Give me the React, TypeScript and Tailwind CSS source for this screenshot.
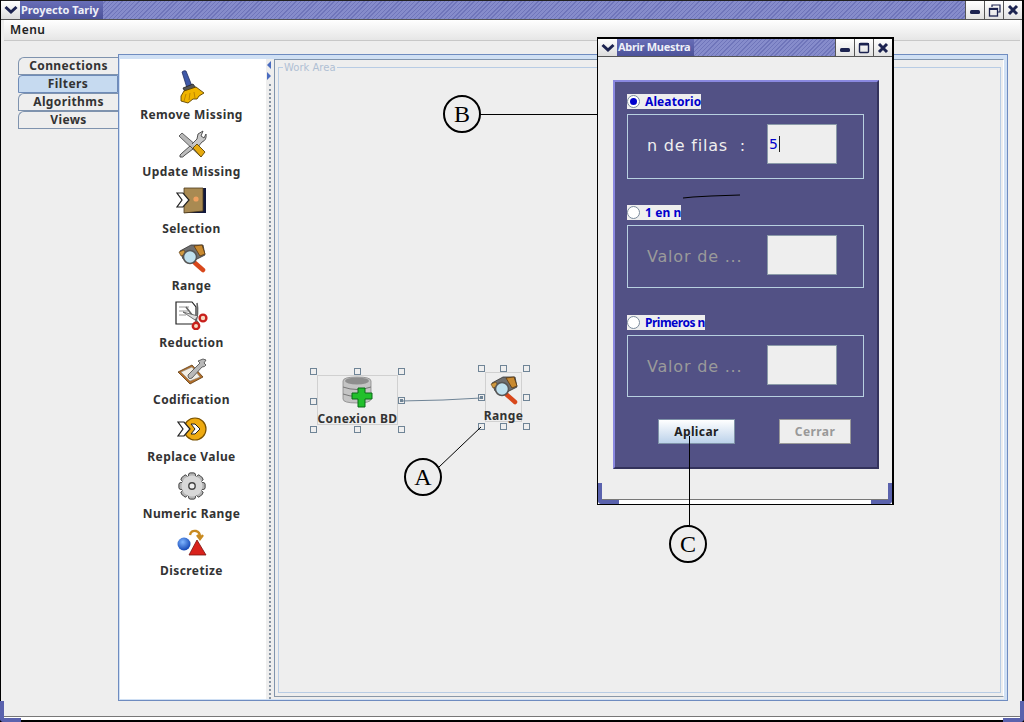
import React from 'react';

const hatch =
  'bg-[repeating-linear-gradient(135deg,#6f75ba_0px,#6f75ba_1px,#868ccb_1px,#868ccb_3px)]';
const titleText =
  "h-full flex items-center pl-[1px] pr-[4px] bg-gradient-to-b from-[#686eb8] to-[#4c5299] font-['Noto_Sans',sans-serif] text-[11px] font-bold text-[#eef0f8]";
const bold = "font-['Noto_Sans',sans-serif] font-bold text-[12px] tracking-[0.4px] whitespace-nowrap";

const Chevron = () => (
  <svg width="14" height="10" viewBox="0 0 14 10">
    <path d="M1.5 2 L7 7 L12.5 2" fill="none" stroke="#1c2350" strokeWidth="3" />
  </svg>
);

const MinIcon = () => (
  <svg width="12" height="12" viewBox="0 0 12 12">
    <rect x="1" y="6" width="10" height="4" rx="1.5" fill="#1c2350" />
  </svg>
);

const MaxIcon = () => (
  <svg width="12" height="12" viewBox="0 0 12 12">
    <rect x="1.5" y="1.5" width="9" height="9" rx="1" fill="none" stroke="#1c2350" strokeWidth="1.4" />
    <rect x="1" y="1" width="10" height="2.5" fill="#1c2350" />
  </svg>
);

const RestoreIcon = () => (
  <svg width="13" height="13" viewBox="0 0 13 13">
    <path d="M4 3 V1 H12 V8 H10" fill="none" stroke="#1c2350" strokeWidth="1.2" />
    <rect x="1.5" y="4.5" width="8" height="7.5" fill="none" stroke="#1c2350" strokeWidth="1.3" />
    <rect x="1" y="4" width="9" height="2" fill="#1c2350" />
  </svg>
);

const CloseIcon = () => (
  <svg width="12" height="12" viewBox="0 0 12 12">
    <path d="M2 2 L10 10 M10 2 L2 10" stroke="#1c2350" strokeWidth="3" />
  </svg>
);

const WinButton = ({ children }: { children: React.ReactNode }) => (
  <div className="w-[19px] h-full flex items-center justify-center bg-gradient-to-b from-white to-[#e2e2e2] border-l border-[#555]">
    {children}
  </div>
);

const Broom = () => (
  <svg width="32" height="34" viewBox="0 0 32 34">
    <path d="M6 2 Q8 0 10 1 L16 16 L11 18 Z" fill="#3f59a8" stroke="#24305f" strokeWidth="0.8" />
    <path d="M7 18 L17 14 L20 18 L9 22 Z" fill="#555" stroke="#222" strokeWidth="0.8" />
    <path d="M8 21 L20 17 L28 23 L23 26 L21 29 L17 29 L12 33 L5 31 L5 26 Z" fill="#f0b400" stroke="#5d4300" strokeWidth="0.9" />
    <path d="M10 24 L8 31 M14 23 L13 30 M18 22 L19 28" stroke="#b07a00" strokeWidth="0.8" />
  </svg>
);

const Tools = () => (
  <svg width="32" height="30" viewBox="0 0 32 30">
    <path d="M6 4 L3 7 L24 27 L28 23 Z" fill="#b8b8b8" stroke="#444" strokeWidth="0.8" />
    <path d="M16 15 L21 10 L22 5 L27 2 L25 7 L28 9 L30 5 Q31 11 26 13 L21 19" fill="#c8c8c8" stroke="#444" strokeWidth="0.9" />
    <path d="M14 17 L6 24 Q3 26 4 28 Q7 29 9 26 L17 20 Z" fill="#bdbdbd" stroke="#444" strokeWidth="0.9" />
    <path d="M17 19 L21 15 L29 23 L25 28 Z" fill="#e6aa10" stroke="#5d4300" strokeWidth="0.9" />
  </svg>
);

const ArrowOutline = ({ x, y }: { x: number; y: number }) => (
  <path d={`M${x} ${y} h6 l6 7 l-6 7 h-6 l5 -7 Z`} fill="#fff" stroke="#222" strokeWidth="1.2" />
);

const Door = () => (
  <svg width="32" height="30" viewBox="0 0 32 30">
    <rect x="8" y="2" width="22" height="25" fill="#12183c" />
    <path d="M8 2 H27 V25 L8 27 Z" fill="#a98a52" stroke="#4b3a1c" strokeWidth="0.8" />
    <circle cx="20" cy="13" r="2.6" fill="#f0a060" />
    <ArrowOutline x={1} y={7} />
  </svg>
);

const RangeIcon = () => (
  <svg className="shrink-0" width="30" height="30" viewBox="0 0 30 30">
    <path d="M3 8 L14 2 L26 2 L28 12 L16 18 L6 16 Z" fill="#6f6f6f" stroke="#333" strokeWidth="0.8" />
    <path d="M17 3 L25 2 L28 11 L23 13 Z" fill="#c98a30" stroke="#5d3a10" strokeWidth="0.8" />
    <path d="M2 9 L7 7 L9 11 L4 13 Z" fill="#d19a40" stroke="#5d3a10" strokeWidth="0.6" />
    <path d="M18 20 L26 27" stroke="#d8481c" strokeWidth="4.5" strokeLinecap="round" />
    <circle cx="13" cy="14" r="6.5" fill="#bfe0ee" stroke="#555" strokeWidth="1.5" />
  </svg>
);

const Scissors = () => (
  <svg width="34" height="30" viewBox="0 0 34 30">
    <path d="M1 2 H17 L21 7 V24 H1 Z" fill="#fff" stroke="#222" strokeWidth="1.2" />
    <path d="M4 7 H14 M4 11 H13 M4 15 H11" stroke="#999" strokeWidth="1" />
    <path d="M11 7 L24 24 M22 3 Q24 14 20 24" fill="none" stroke="#666" strokeWidth="1.6" />
    <path d="M8 12 L20 20 L23 16 Z" fill="#ddd" stroke="#555" strokeWidth="0.8" />
    <circle cx="28" cy="18" r="3.4" fill="#f6d9c0" stroke="#c8201c" strokeWidth="2.4" />
    <circle cx="21" cy="26" r="3.2" fill="#f6d9c0" stroke="#c8201c" strokeWidth="2.4" />
  </svg>
);

const Clipboard = () => (
  <svg width="32" height="28" viewBox="0 0 32 28">
    <path d="M2 14 L16 7 L27 19 L14 26 Z" fill="#b5702a" stroke="#5d3a10" strokeWidth="0.8" />
    <path d="M5 14 L16 9 L24 19 L14 23 Z" fill="#f3efe6" stroke="#888" strokeWidth="0.6" />
    <path d="M12 17 L24 5 L22 3 L27 1 L30 2 L28 5 L30 7 Q29 9 26 9 L16 20 Q12 22 12 17 Z" fill="#b8b8b8" stroke="#555" strokeWidth="0.9" />
  </svg>
);

const Replace = () => (
  <svg width="30" height="28" viewBox="0 0 30 28">
    <circle cx="18" cy="14" r="11" fill="#eeaa10" stroke="#7a5200" strokeWidth="1.2" />
    <path d="M14 9 h4 l5 5 l-5 5 h-4 l4 -5 Z" fill="#fff" stroke="#222" strokeWidth="1" />
    <ArrowOutline x={1} y={7} />
  </svg>
);

const Gear = () => {
  const teeth = [0, 45, 90, 135, 180, 225, 270, 315];
  return (
    <svg width="28" height="28" viewBox="0 0 28 28">
      {teeth.map((a) => (
        <rect
          key={a}
          x="10.5"
          y="1"
          width="7"
          height="26"
          rx="2"
          fill="#b4b4b4"
          stroke="#444"
          strokeWidth="0.8"
          transform={`rotate(${a} 14 14)`}
        />
      ))}
      <circle cx="14" cy="14" r="10.5" fill="#d8d8d8" />
      <circle cx="14" cy="14" r="3.2" fill="#eee" stroke="#444" strokeWidth="1.4" />
    </svg>
  );
};

const Shapes = () => (
  <svg width="32" height="30" viewBox="0 0 32 30">
    <defs>
      <radialGradient id="ball" cx="0.4" cy="0.35" r="0.7">
        <stop offset="0" stopColor="#7fb5ff" />
        <stop offset="1" stopColor="#0b3fb0" />
      </radialGradient>
    </defs>
    <path d="M14 7 Q15 2 20 3 Q24 4 24 9 M21 7 L24 11 L27 7" fill="none" stroke="#c88a20" strokeWidth="2.4" />
    <circle cx="8" cy="16" r="6.5" fill="url(#ball)" />
    <path d="M21 12 L30 27 H13 Z" fill="#d9221c" stroke="#7a1410" strokeWidth="0.8" />
  </svg>
);

const DbIcon = () => (
  <svg className="shrink-0" width="32" height="32" viewBox="0 0 32 32">
    <path d="M1 5 Q1 1 15 1 Q29 1 29 5 V23 Q29 27 15 27 Q1 27 1 23 Z" fill="#c4c4c4" stroke="#888" strokeWidth="0.8" />
    <ellipse cx="15" cy="5" rx="12" ry="3.4" fill="#8e8e8e" />
    <path d="M1 11 Q15 16 29 11 M1 18 Q15 23 29 18" fill="none" stroke="#777" strokeWidth="1" />
    <path d="M16 12 H23 V17 H30 V23 H23 V31 H16 V23 H10 V17 H16 Z" fill="#22c02c" stroke="#0b6a18" strokeWidth="1" />
  </svg>
);

const tools = [
  { label: 'Remove Missing', icon: <Broom /> },
  { label: 'Update Missing', icon: <Tools /> },
  { label: 'Selection', icon: <Door /> },
  { label: 'Range', icon: <RangeIcon /> },
  { label: 'Reduction', icon: <Scissors /> },
  { label: 'Codification', icon: <Clipboard /> },
  { label: 'Replace Value', icon: <Replace /> },
  { label: 'Numeric Range', icon: <Gear /> },
  { label: 'Discretize', icon: <Shapes /> },
];

const tabs = ['Connections', 'Filters', 'Algorithms', 'Views'];

const Handle = ({ x, y, dot }: { x: number; y: number; dot?: boolean }) => (
  <div
    className="absolute w-[7px] h-[7px] border border-[#6f8496] bg-[#eeeeee] flex items-center justify-center"
    style={{ left: x, top: y }}
  >
    {dot && <div className="w-[3px] h-[3px] bg-[#6f8496]" />}
  </div>
);

const Radio = ({ label, checked, tight }: { label: string; checked?: boolean; tight?: boolean }) => (
  <div className="flex items-center h-[15px] w-fit bg-[#eeeeee]">
    <div className="w-[13px] h-[13px] rounded-full border border-[#7a8a9c] bg-white flex items-center justify-center shrink-0">
      {checked && <div className="w-[7px] h-[7px] rounded-full bg-[#0000cc]" />}
    </div>
    <span
      className={`ml-[5px] font-['Noto_Sans',sans-serif] text-[12px] leading-none font-bold text-[#0000cc] whitespace-nowrap ${
        tight ? 'tracking-[-0.5px]' : 'tracking-[0.1px]'
      }`}
    >
      {label}
    </span>
  </div>
);

const TextBox = ({ children }: { children?: React.ReactNode }) => (
  <div className="w-[70px] h-[40px] shrink-0 bg-[#eeeeee] border border-[#8a9aa8] flex items-center pl-[1px]">{children}</div>
);

const Group = ({
  label,
  muted,
  value,
  height,
}: {
  label: string;
  muted?: boolean;
  value?: boolean;
  height: string;
}) => (
  <div className={`w-[237px] ${height} border border-[#b8d0e0] pt-[9px] pl-[19px] pr-[26px]`}>
    <div className="flex items-center justify-between">
      <span className={`pt-[3px] text-[16px] tracking-[0.8px] whitespace-pre ${muted ? 'text-[#9a9a9a]' : 'text-[#eeeeee]'}`}>
        {label}
      </span>
      <TextBox>
        {value && (
          <>
            <span className="text-[14px] text-[#0000cc]">5</span>
            <span className="ml-[1px] w-px h-[16px] bg-[#222]" />
          </>
        )}
      </TextBox>
    </div>
  </div>
);

const Callout = ({ x, y, letter }: { x: number; y: number; letter: string }) => (
  <div
    className="absolute w-[38px] h-[38px] rounded-full border-2 border-black bg-[#eeeeee] flex items-center justify-center font-['Liberation_Serif',serif] text-[24px] leading-none text-black"
    style={{ left: x, top: y }}
  >
    {letter}
  </div>
);

const FrameCorner = ({ side }: { side: 'left' | 'right' }) => (
  <div
    className={`absolute bottom-0 w-[21px] h-[21px] border-b-[4px] border-[#5a62ad] ${
      side === 'left' ? 'left-0 border-l-[4px] rounded-bl-[4px]' : 'right-0 border-r-[4px] rounded-br-[4px]'
    }`}
  />
);

export default function App() {
  return (
    <div className="relative w-[1024px] h-[722px] overflow-hidden bg-[#eeeeee] font-['DejaVu_Sans',sans-serif] flex flex-col">
      {/* Main title bar */}
      <div className="h-[20px] shrink-0 ml-[1px] mr-[2px] flex border-t border-[#222] border-b border-b-[#555]">
        <div className="w-[19px] flex items-center justify-center bg-gradient-to-b from-white to-[#dcdcdc]">
          <Chevron />
        </div>
        <div className={`flex-1 flex items-center ${hatch}`}>
          <span className={titleText}>Proyecto Tariy</span>
        </div>
        <WinButton><MinIcon /></WinButton>
        <WinButton><RestoreIcon /></WinButton>
        <WinButton><CloseIcon /></WinButton>
      </div>

      {/* Menu */}
      <div className="h-[21px] shrink-0 mx-[4px] flex items-center pl-[6px] bg-gradient-to-b from-white to-[#e6e6e6] border-b border-[#c8c8c8] font-['Noto_Sans',sans-serif] font-semibold text-[12px] tracking-[0.5px] text-[#222]">
        Menu
      </div>

      <div className="flex-1 min-h-0 flex pl-[18px] pt-[13px]">
        {/* Side tabs */}
        <div className="w-[100px] shrink-0 pt-[3px] flex flex-col">
          {tabs.map((t) => (
            <div
              key={t}
              className={
                t === 'Filters'
                  ? `h-[18px] flex items-center justify-center bg-[#c6daf0] border border-[#6f8cb8] rounded-tl-[4px] text-[#333] ${bold}`
                  : `h-[18px] flex items-center justify-center border-l border-t border-b border-[#7f93ae] rounded-tl-[6px] text-[#333] ${bold}`
              }
            >
              {t}
            </div>
          ))}
        </div>

        {/* Main panel */}
        <div className="w-[890px] h-[647px] shrink-0 border border-[#6f8cc0] bg-[#d0e0f4] pt-[4px] pb-[1px] pl-[1px] pr-[3px]">
          <div className="h-full flex bg-[#eeeeee]">
            {/* Tool list */}
            <div className="w-[146px] shrink-0 bg-white pt-[10px] pr-[3px] flex flex-col">
              {tools.map((tool) => (
                <div key={tool.label} className="h-[57px] shrink-0 flex flex-col items-center">
                  <div className="h-[36px] flex items-center justify-center">{tool.icon}</div>
                  <span className={`mt-[2px] leading-[16px] text-[#333] ${bold}`}>{tool.label}</span>
                </div>
              ))}
            </div>

            {/* Split bar */}
            <div className="w-[8px] shrink-0 relative bg-[#eeeeee]">
              <div className="absolute left-[1px] top-[2px] w-0 h-0 border-y-[4px] border-y-transparent border-r-[4px] border-r-[#4a6cc0]" />
              <div className="absolute left-[1px] top-[13px] w-0 h-0 border-y-[4px] border-y-transparent border-l-[4px] border-l-[#4a6cc0]" />
              <div className="absolute left-[3px] top-[25px] bottom-0 border-l-2 border-dotted border-[#8a96a4]" />
            </div>

            {/* Work area */}
            <div className="flex-1 min-w-0 mb-[2px] bg-[#eeeeee] border-t border-l border-[#8094ac] border-b border-b-[#8a98a8] border-r border-r-white pl-[3px] pt-[7px] pr-[2px] pb-[3px]">
              <div className="h-full relative border border-[#b8cce4]">
                <span className="absolute left-[4px] top-[-6px] px-[1px] bg-[#eeeeee] text-[10px] leading-[12px] text-[#b0c0d4]">
                  Work Area
                </span>
              </div>
            </div>
          </div>
        </div>
      </div>

      {/* Bottom edge of main window */}
      <div className="absolute left-[1px] right-[2px] bottom-[1px] h-[5px] bg-white border-t border-[#777]" />

      {/* Diagram nodes */}
      <div className="absolute left-[317px] top-[375px] w-[81px] h-[50px] border border-[#d0d0d0] flex flex-col items-center">
        <DbIcon />
        <span className={`mt-[4px] leading-[14px] text-[#333] ${bold}`}>Conexion BD</span>
      </div>
      <div className="absolute left-[485px] top-[372px] w-[37px] h-[50px] border border-[#d0d0d0] flex flex-col items-center pt-[2px]">
        <RangeIcon />
        <span className={`mt-[4px] leading-[14px] text-[#333] ${bold}`}>Range</span>
      </div>
      <Handle x={310} y={368} />
      <Handle x={354} y={368} />
      <Handle x={398} y={368} />
      <Handle x={310} y={398} />
      <Handle x={398} y={397} dot />
      <Handle x={310} y={426} />
      <Handle x={354} y={426} />
      <Handle x={398} y={426} />
      <Handle x={478} y={365} />
      <Handle x={500} y={365} />
      <Handle x={523} y={365} />
      <Handle x={478} y={394} dot />
      <Handle x={523} y={394} />
      <Handle x={478} y={423} />
      <Handle x={500} y={423} />
      <Handle x={523} y={423} />

      {/* Frame of main window */}
      <div className="absolute inset-0 border-l border-r-2 border-b-2 border-black pointer-events-none" />
      <FrameCorner side="left" />
      <FrameCorner side="right" />

      {/* Abrir Muestra window */}
      <div className="absolute left-[597px] top-[37px] w-[297px] h-[468px] border border-black border-t-2 border-r-2 bg-[#eeeeee] flex flex-col">
        <div className="h-[18px] shrink-0 flex border-b border-[#555]">
          <div className="w-[19px] flex items-center justify-center bg-gradient-to-b from-white to-[#dcdcdc]">
            <Chevron />
          </div>
          <div className={`flex-1 flex items-center ${hatch}`}>
            <span className={`${titleText} tracking-[-0.3px]`}>Abrir Muestra</span>
          </div>
          <WinButton><MinIcon /></WinButton>
          <WinButton><MaxIcon /></WinButton>
          <WinButton><CloseIcon /></WinButton>
        </div>

        <div className="flex-1 pl-[15px] pt-[23px]">
          <div className="w-[266px] h-[389px] bg-[#525185] border-2 border-t-[#8a88e0] border-l-[#8a88e0] border-r-[#33325c] border-b-[#33325c] pl-[12px] pt-[12px] flex flex-col">
            <Radio label="Aleatorio" checked />
            <div className="mt-[5px]">
              <Group label="n de filas  :" value height="h-[65px]" />
            </div>
            <div className="mt-[26px]">
              <Radio label="1 en n" />
            </div>
            <div className="mt-[5px]">
              <Group label="Valor de ..." muted height="h-[63px]" />
            </div>
            <div className="mt-[27px]">
              <Radio label="Primeros n" tight />
            </div>
            <div className="mt-[5px]">
              <Group label="Valor de ..." muted height="h-[62px]" />
            </div>
            <div className="mt-[22px] pl-[31px] flex gap-[44px]">
              <div className={`w-[77px] h-[25px] border border-[#7f93a8] bg-gradient-to-b from-white to-[#bcd2ea] flex items-center justify-center text-[#222] ${bold}`}>
                Aplicar
              </div>
              <div className={`w-[72px] h-[25px] border border-[#999] bg-[#eeeeee] flex items-center justify-center text-[#999] ${bold}`}>
                Cerrar
              </div>
            </div>
          </div>
        </div>
        <div className="h-[5px] shrink-0 bg-white border-t border-[#777]" />
        <FrameCorner side="left" />
        <FrameCorner side="right" />
      </div>

      {/* Hand drawn annotations */}
      <svg className="absolute left-0 top-0 pointer-events-none" width="1024" height="722">
        <path d="M401 401 L443 400 L481 398" fill="none" stroke="#6f8496" strokeWidth="1" />
        <path d="M481 427 L439 467" stroke="#000" strokeWidth="1" />
        <path d="M480 114.5 H597" stroke="#000" strokeWidth="1" />
        <path d="M689.5 436 V526" stroke="#000" strokeWidth="1" />
        <path d="M683 198 L693 197 L711 196 L740 195" fill="none" stroke="#000" strokeWidth="1" />
      </svg>
      <Callout x={404} y={458} letter="A" />
      <Callout x={443} y={95} letter="B" />
      <Callout x={669} y={525} letter="C" />
    </div>
  );
}
